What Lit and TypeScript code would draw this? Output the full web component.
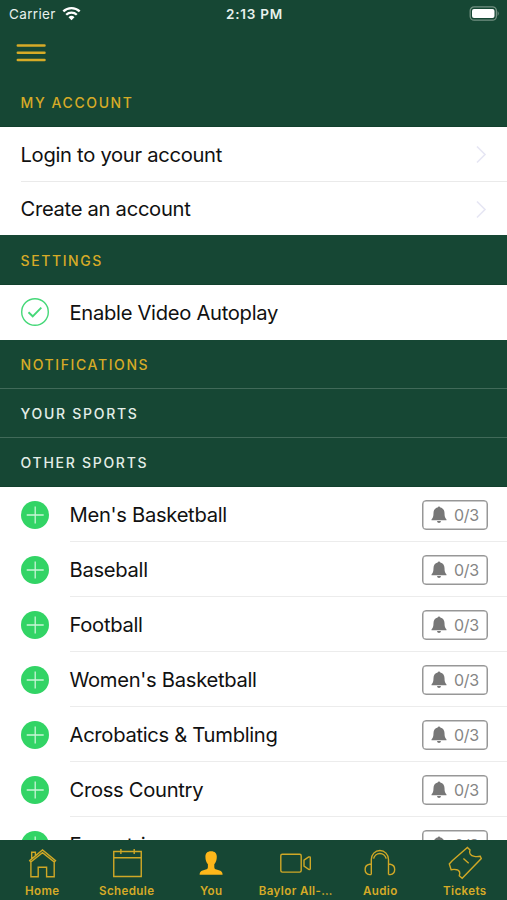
import { LitElement, html, css, svg } from "lit";
import { customElement } from "lit/decorators.js";

const SPORTS = ["Men's Basketball", "Baseball", "Football", "Women's Basketball", "Acrobatics & Tumbling", "Cross Country", "Equestrian"];

const TABS = [
  { label: "Home", icon: svg`<path d="M15.900 22.300V36.700h7.300V27.300h8.400v9.400h7.600V22.300M14.700 20.600 27.500 9.900 40.500 20.600 39.300 22.100 27.500 12.700 15.800 22.100zM16.700 18.500V12.300h3.700v3"/>` },
  { label: "Schedule", icon: svg`<path d="M13.750 11.500h27.500v25h-27.500zM13.750 17.800h27.500M20.900 9v5M34.200 9v5"/>` },
  { label: "You", icon: svg`<path class="fill" d="M27.100 11.200c3.900 0 5.700 2.200 5.700 5.500 0 3-.9 5.600-2.500 7.600v2.600c0 1.400.7 2.100 2.200 2.600l3.100 1.100c2 .7 2.900 1.700 3 4.100H15.600c.1-2.400 1-3.400 3-4.100l3.100-1.100c1.500-.5 2.200-1.200 2.200-2.600v-2.600c-1.600-2-2.500-4.600-2.500-7.600 0-3.300 1.800-5.500 5.700-5.500z"/>` },
  { label: "Baylor All-…", icon: svg`<rect x="11.800" y="14.200" width="20.400" height="17.900" rx="1.500"/><path d="M35 20.200 39.700 17q1.600-.5 1.600.8v10.700q0 1.300-1.600.8L35 26.200z"/>` },
  { label: "Audio", icon: svg`<path d="M18.300 34.600V19.500a8.600 9 0 0 1 17.200 0V34.600M20.600 18.700a6.400 6.400 0 0 1 12.600 0M18.300 24.300h-1.700a5.200 5.200 0 0 0 0 10.300h1.700M35.500 24.300h1.700a5.200 5.200 0 0 1 0 10.300h-1.700"/>` },
  { label: "Tickets", icon: svg`<path d="M14.200 20.700 29.400 7.400 32 10c-1.300 3.200.4 5.800 4.400 6.400q3 .5 5.900-.2l1 2.300L24.200 38.200l-2.900-2.500c1-2.700.2-5-2.500-6q-2.700-.7-5.700 0L11.300 24zM25.400 18.500l5.300 4.800"/>` },
];

@customElement("app-root")
export class AppRoot extends LitElement {
  static styles = css`
    :host { display: flex; flex-direction: column; height: 900px; width: 507px; overflow: hidden; background: #fff;
      font-family: Inter, "Liberation Sans", sans-serif; color: #111; }
    * { box-sizing: border-box; }
    svg { display: block; fill: none; flex: none; }
    .top { background: #164734; height: 78px; flex: none; }
    .status { height: 27px; display: grid; grid-template-columns: 1fr auto 1fr; align-items: center; padding: 0 7px 0 9px; color: #e8f1ec; font-size: 13.500px; }
    .carrier { display: flex; align-items: center; gap: 6px; letter-spacing: .35px; }
    .time { font-weight: 600; letter-spacing: .75px; }
    .battery { justify-self: end; }
    .menu { display: flex; padding: 17px 0 0 16px; }
    .section { background: #164734; height: 49px; flex: none; display: flex; align-items: center; padding-left: 20.500px;
      font-size: 14px; font-weight: 500; letter-spacing: 1.600px; color: #e4eee8; border-bottom: 1px solid #416a59; }
    .lower { padding-top: 1px; letter-spacing: 1.720px; }
    .tall { height: 50px; padding-top: 1px; }
    .gold { color: #d6ab27; }
    .edge { border-bottom-color: #12402d; }
    .link { display: flex; align-items: center; height: 54px; flex: none; margin-left: 20.500px; padding-right: 20px; justify-content: space-between; }
    .link + .link { border-top: 1px solid #eaeaea; }
    .label { font-size: 20.200px; letter-spacing: -.3px; white-space: nowrap; }
    .row { display: flex; height: 55px; flex: none; padding-left: 20.500px; }
    .row > svg { margin: 14px 21px 0 0; }
    .check { height: 55px; }
    .check > svg { margin-top: 13px; }
    .body { flex: 1; display: flex; align-items: center; justify-content: space-between; padding: 1px 19px 0 0; border-bottom: 1px solid #ececec; }
    .plain { border-bottom: 0; padding-top: 0; }
    .list { flex: 1; min-height: 0; overflow: hidden; display: flex; flex-direction: column; }
    .badge { width: 66px; height: 30px; border: 1.500px solid #979797; border-radius: 4px; display: flex; align-items: center; padding-left: 8px; gap: 7px; color: #858585; font-size: 16px; letter-spacing: -.3px; box-shadow: inset 0 0 0 .5px #979797; }
    .tabs { height: 60px; flex: none; background: #164734; display: grid; grid-template-columns: repeat(6, 1fr); color: #d6ab27; }
    .tab { display: flex; flex-direction: column; align-items: center; font-size: 11.600px; font-weight: 600; letter-spacing: .37px; white-space: nowrap; }
    .tab svg { stroke: #d0a826; stroke-width: 1.400; }
    .tab .fill { fill: #fdb71a; stroke: none; }
    .tab span { line-height: 16px; }
  `;

  render() {
    const link = (t: string) => html`<div class="link"><span class="label">${t}</span>
      <svg width="12" height="20" stroke="#e6e6f4" stroke-width="1.600"><path d="M2 2.500l8 8-8 8"/></svg></div>`;
    return html`
      <div class="top">
        <div class="status">
          <span class="carrier">Carrier
            <svg width="19" height="15" viewBox="0 0 19 15" stroke="#fff" stroke-width="2.300"><path d="M1.300 5.400a11.800 11.800 0 0 1 16.400 0M4.200 8.700a7.600 7.600 0 0 1 10.600 0"/><path d="M6.500 11.200a4.300 4.300 0 0 1 6 0L9.500 14.300z" fill="#fff" stroke="none"/></svg>
          </span>
          <span class="time">2:13 PM</span>
          <svg class="battery" width="31" height="15" viewBox="0 0 31 15"><rect x="1.200" y=".8" width="26.200" height="13.400" rx="4" stroke="#739182" stroke-width="1.300"/><rect x="3" y="2.900" width="22.500" height="9.200" rx="2" fill="#fff"/><path d="M28.600 5q2.300 2.500 0 5z" fill="#739182"/></svg>
        </div>
        <div class="menu"><svg width="30" height="19" stroke="#d6ab27" stroke-width="2.500" stroke-linecap="round"><path d="M1.800 1.600h26.700M1.800 8.700h26.700M1.800 16h26.700"/></svg></div>
      </div>
      <div class="section gold edge">MY ACCOUNT</div>
      ${link("Login to your account")}${link("Create an account")}
      <div class="section gold edge tall">SETTINGS</div>
      <div class="row check"><svg width="28" height="28" stroke="#45d878"><circle cx="14" cy="14" r="13.300" stroke-width="1.400"/><path d="M7.500 14.300l4.200 4 8.600-8.700" stroke-width="1.900"/></svg>
        <div class="body plain"><span class="label">Enable Video Autoplay</span></div></div>
      <div class="section gold">NOTIFICATIONS</div>
      <div class="section lower">YOUR SPORTS</div>
      <div class="section lower edge">OTHER SPORTS</div>
      <div class="list">
        ${SPORTS.map((s) => html`<div class="row">
          <svg width="28" height="28"><circle cx="14" cy="14" r="14" fill="#32d465"/><path d="M5.700 14h17M14.200 5.500v17" stroke="#c9f5d6" stroke-width="1.300"/></svg>
          <div class="body"><span class="label">${s}</span>
            <span class="badge"><svg width="16" height="18" viewBox="0 0 16 18"><path fill="#777" d="M8 .5q1.100 0 1.300 1c2.900.6 4.200 2.800 4.200 5.600 0 3.600.6 4.900 2 6.300v.8H.5v-.8c1.400-1.400 2-2.700 2-6.300C2.500 4.300 3.800 2.100 6.700 1.500Q6.900.5 8 .5zM6 15h4q-.2 1.900-2 1.900T6 15z"/></svg>0/3</span>
          </div></div>`)}
      </div>
      <div class="tabs">
        ${TABS.map((t) => html`<div class="tab"><svg width="54" height="43" viewBox="0 0 54 43">${t.icon}</svg><span>${t.label}</span></div>`)}
      </div>`;
  }
}
